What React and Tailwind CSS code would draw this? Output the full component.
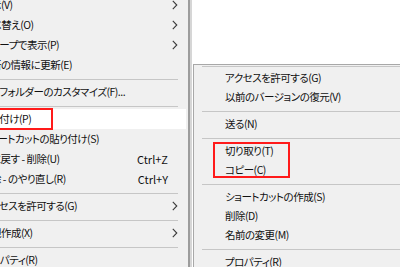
import React from "react";

const Chevron = () => (
  <svg width="6" height="10" viewBox="0 0 6 10" className="block">
    <path d="M0.8 0.8 L4.8 5 L0.8 9.2" fill="none" stroke="#3a3a3a" strokeWidth="1.1" />
  </svg>
);

const leftItems = [
  { t: "表示(V)", arrow: true },
  { t: "並べ替え(O)", arrow: true },
  { t: "グループで表示(P)", arrow: true },
  { t: "最新の情報に更新(E)" },
  { sep: true },
  { t: "このフォルダーのカスタマイズ(F)..." },
  { sep: true },
  { t: "貼り付け(P)", hl: true },
  { t: "ショートカットの貼り付け(S)" },
  { t: "元に戻す - 削除(U)", sc: "Ctrl+Z" },
  { t: "削除 - のやり直し(R)", sc: "Ctrl+Y" },
  { sep: true },
  { t: "アクセスを許可する(G)", arrow: true },
  { sep: true },
  { t: "新規作成(X)", arrow: true },
  { sep: true },
  { t: "プロパティ(R)" },
];

function LeftRow({ item }) {
  if (item.sep) {
    return (
      <div className="h-[7px] pt-[4px] pr-[10px]">
        <div className="h-px bg-[#c6c6c6]" />
      </div>
    );
  }
  return (
    <div className="relative h-[20px] mr-[2px]">
      <div className={"flex items-center h-full pr-[8px] " + (item.hl ? "bg-white" : "")}>
        <span className="flex-1 -ml-[19px] whitespace-nowrap tracking-[-0.5px]">{item.t}</span>
        {item.sc && <span className="whitespace-nowrap mr-[2px] text-[11px]">{item.sc}</span>}
        <span className="w-[8px] flex justify-end">{item.arrow && <Chevron />}</span>
      </div>
      {item.hl && (
        <div className="absolute -left-[4px] -top-[1px] w-[57px] h-[22px] border-2 border-[#ff1a1a]" />
      )}
    </div>
  );
}

function RightSep() {
  return (
    <div className="h-[8px] pt-[4px] pl-[8px]">
      <div className="h-px bg-[#c6c6c6]" />
    </div>
  );
}

function RightRow({ t }) {
  return (
    <div className="h-[19px] flex items-center pl-[31px] whitespace-nowrap tracking-[-0.5px]">{t}</div>
  );
}

export default function App() {
  return (
    <div
      className="w-[400px] h-[267px] overflow-hidden bg-white flex text-[10.5px] leading-none text-[#111] [font-feature-settings:'palt']"
      style={{ fontFamily: "'Noto Sans CJK JP', 'Noto Sans', sans-serif" }}
    >
      <div className="flex shrink-0 h-full">
        <div className="w-[188px] bg-[#f0f0f0] overflow-hidden">
          <div className="-mt-[5px] flex flex-col">
            {leftItems.map((it, i) => (
              <LeftRow key={i} item={it} />
            ))}
          </div>
        </div>
        <div className="w-[2px] bg-[#9c9c9c]" />
        <div className="w-[2px] bg-[#d6d6d6]" />
      </div>
      <div className="flex-1 pt-[64px] pl-[1px] flex flex-col">
        <div className="flex-1 bg-[#f0f0f0] border-l border-t border-[#a8a8a8] flex flex-col">
          <div className="pt-[1px] pl-[8px]">
            <div className="h-px bg-[#c6c6c6]" />
          </div>
          <div className="h-[2px]" />
          <RightRow t="アクセスを許可する(G)" />
          <RightRow t="以前のバージョンの復元(V)" />
          <RightSep />
          <RightRow t="送る(N)" />
          <RightSep />
          <div className="relative">
            <RightRow t="切り取り(T)" />
            <RightRow t="コピー(C)" />
            <div className="absolute left-[19px] top-0 w-[77px] h-[36px] border-2 border-[#ff1a1a]" />
          </div>
          <RightSep />
          <RightRow t="ショートカットの作成(S)" />
          <RightRow t="削除(D)" />
          <RightRow t="名前の変更(M)" />
          <RightSep />
          <RightRow t="プロパティ(R)" />
        </div>
      </div>
    </div>
  );
}
